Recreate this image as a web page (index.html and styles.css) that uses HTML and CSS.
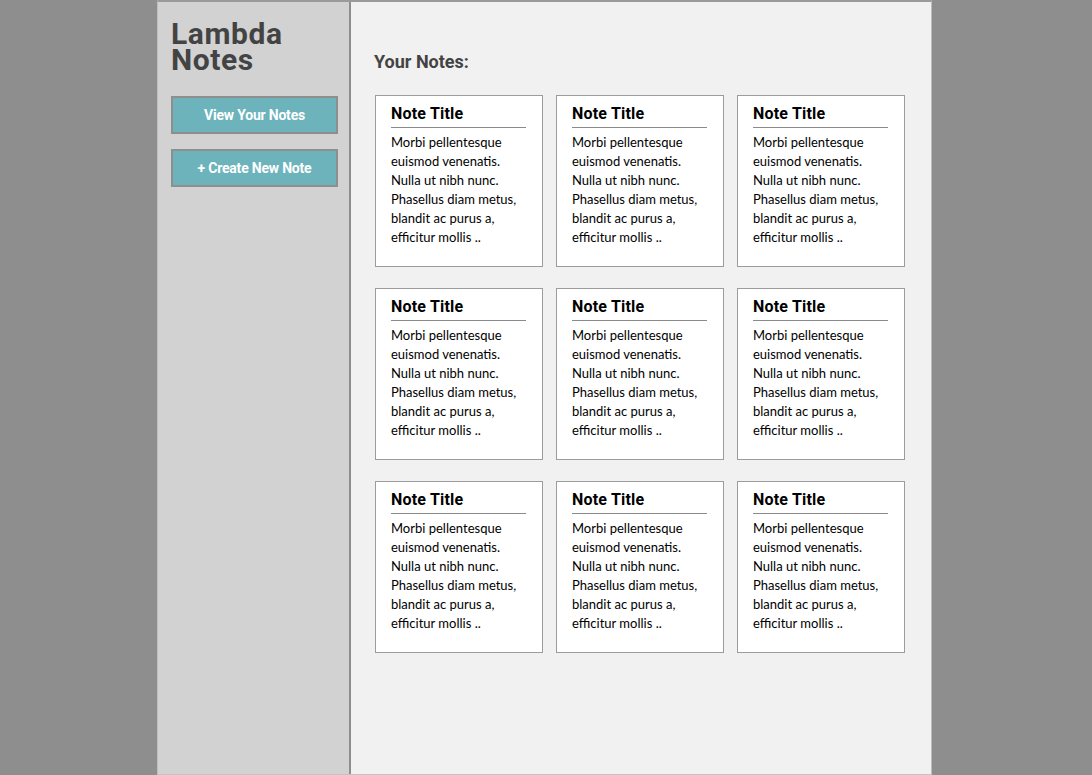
FILE: index.html
```html
<!DOCTYPE html>
<html>
<head>
<meta charset="utf-8">
<link rel="stylesheet" href="styles.css">
</head>
<body>
<div class="app">
  <aside class="sidebar">
    <h1 class="brand">Lambda<br>Notes</h1>
    <button class="btn">View Your Notes</button>
    <button class="btn">+ Create New Note</button>
  </aside>
  <main class="main">
    <h2 class="heading">Your Notes:</h2>
    <div class="grid">
      <div class="card"><h3 class="card-title">Note Title</h3><p class="card-text">Morbi pellentesque euismod venenatis. Nulla ut nibh nunc. Phasellus diam metus, blandit ac purus a, efficitur mollis ..</p></div>
      <div class="card"><h3 class="card-title">Note Title</h3><p class="card-text">Morbi pellentesque euismod venenatis. Nulla ut nibh nunc. Phasellus diam metus, blandit ac purus a, efficitur mollis ..</p></div>
      <div class="card"><h3 class="card-title">Note Title</h3><p class="card-text">Morbi pellentesque euismod venenatis. Nulla ut nibh nunc. Phasellus diam metus, blandit ac purus a, efficitur mollis ..</p></div>
      <div class="card"><h3 class="card-title">Note Title</h3><p class="card-text">Morbi pellentesque euismod venenatis. Nulla ut nibh nunc. Phasellus diam metus, blandit ac purus a, efficitur mollis ..</p></div>
      <div class="card"><h3 class="card-title">Note Title</h3><p class="card-text">Morbi pellentesque euismod venenatis. Nulla ut nibh nunc. Phasellus diam metus, blandit ac purus a, efficitur mollis ..</p></div>
      <div class="card"><h3 class="card-title">Note Title</h3><p class="card-text">Morbi pellentesque euismod venenatis. Nulla ut nibh nunc. Phasellus diam metus, blandit ac purus a, efficitur mollis ..</p></div>
      <div class="card"><h3 class="card-title">Note Title</h3><p class="card-text">Morbi pellentesque euismod venenatis. Nulla ut nibh nunc. Phasellus diam metus, blandit ac purus a, efficitur mollis ..</p></div>
      <div class="card"><h3 class="card-title">Note Title</h3><p class="card-text">Morbi pellentesque euismod venenatis. Nulla ut nibh nunc. Phasellus diam metus, blandit ac purus a, efficitur mollis ..</p></div>
      <div class="card"><h3 class="card-title">Note Title</h3><p class="card-text">Morbi pellentesque euismod venenatis. Nulla ut nibh nunc. Phasellus diam metus, blandit ac purus a, efficitur mollis ..</p></div>
    </div>
  </main>
</div>
</body>
</html>
```
FILE: styles.css
```css
* { box-sizing: border-box; }
html, body { margin: 0; padding: 0; height: 100%; }
body {
  background: #8e8e8e;
  font-family: Roboto, "Liberation Sans", sans-serif;
  overflow: hidden;
}
.app {
  width: 775px;
  height: 775px;
  margin-left: 157px;
  display: flex;
  border: 1px solid #bdbdbd;
  border-top: 2px solid #9a9a9a;
  border-bottom: 1px solid #c4c4c4;
}
.sidebar {
  width: 193px;
  flex: none;
  background: #d2d2d2;
  border-right: 2px solid #8e8e8e;
  padding: 19px 11px 0 13px;
}
.brand {
  margin: 0 0 23px 0;
  font-size: 30px;
  line-height: 26px;
  font-weight: 700;
  color: #434343;
  letter-spacing: 0.6px;
}
.btn {
  display: block;
  width: 167px;
  height: 38px;
  margin: 0 0 15px 0;
  background: #6cb3bc;
  border: 2px solid #8e8e8e;
  color: #fff;
  font-family: Roboto, "Liberation Sans", sans-serif;
  font-weight: 700;
  font-size: 14px;
  letter-spacing: -0.2px;
  padding: 0;
}
.main {
  flex: 1;
  background: #f1f1f1;
  padding: 48px 0 0 23px;
}
.heading {
  margin: 0 0 21px 0;
  font-size: 18px;
  line-height: 24px;
  font-weight: 700;
  color: #434343;
}
.grid {
  display: grid;
  grid-template-columns: repeat(3, 168px);
  column-gap: 13px;
  row-gap: 21px;
  margin-left: 1px;
}
.card {
  height: 172px;
  background: #fff;
  border: 1px solid #9c9c9c;
  padding: 8px 16px 0 15px;
}
.card-title {
  margin: 0;
  font-size: 16px;
  line-height: 20px;
  font-weight: 700;
  color: #000;
  padding-bottom: 3px;
  border-bottom: 1px solid #8a8a8a;
  letter-spacing: 0.2px;
}
.card-text {
  margin: 5px 0 0 0;
  font-family: Lato, "Open Sans", sans-serif;
  font-size: 13px;
  line-height: 19px;
  color: #000;
}
```
